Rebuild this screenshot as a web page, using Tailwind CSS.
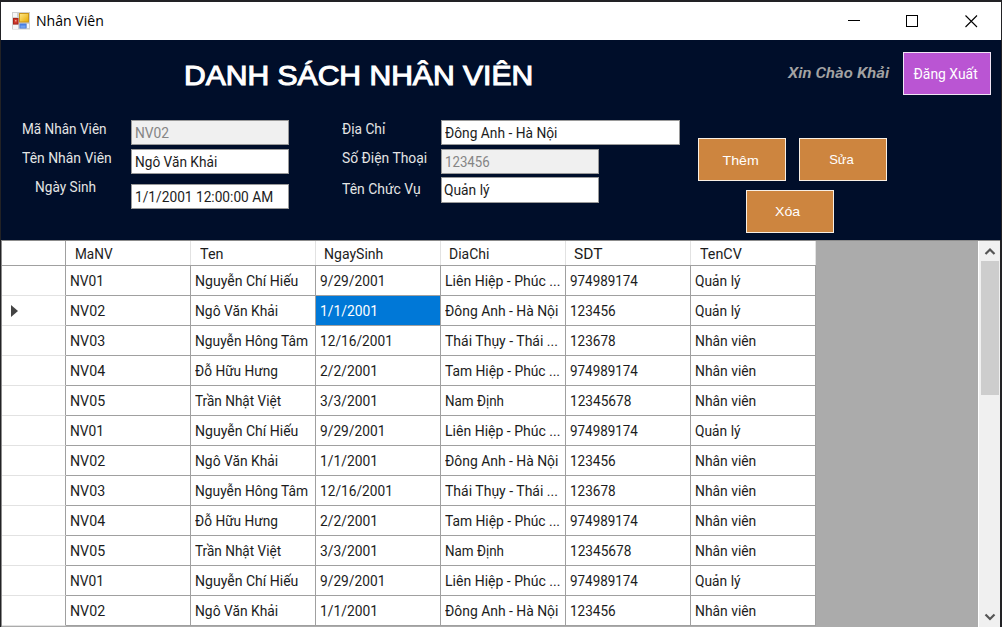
<!DOCTYPE html>
<html lang="vi">
<head>
<meta charset="utf-8">
<title>Nhân Viên</title>
<script src="https://cdn.jsdelivr.net/npm/@tailwindcss/browser@4"></script>
</head>
<body class="h-[627px] w-[1002px] overflow-hidden bg-[#222225] font-['Roboto',sans-serif] text-[15px] leading-[20px] text-[#1c1c1c]">
<div class="flex h-[627px] w-[1002px] flex-col pr-[2px] pl-px pt-[2px]">
  <header class="flex h-[38px] w-[1000px] shrink-0 items-center bg-white pl-[11px]">
    <svg class="h-[18px] w-[18px] shrink-0" viewBox="0 0 18 18">
      <defs>
        <linearGradient id="y" x2="1" y2="1"><stop stop-color="#ffe98a"/><stop offset="1" stop-color="#e6a800"/></linearGradient>
        <linearGradient id="b" x2="0" y2="1"><stop stop-color="#3f74df"/><stop offset="1" stop-color="#8fbdfb"/></linearGradient>
      </defs>
      <rect width="18" height="17.5" fill="#cfcfcf"/>
      <path d="M1 1h4v4H1zM1 13h5v4H1zM15 12h2v4h-2z" fill="#f6f6f6"/>
      <rect x="7.5" y="1.5" width="9" height="8.500" fill="url(#y)" stroke="#c9951a"/>
      <rect x="1.500" y="6.500" width="4.500" height="5.500" fill="#d0392b" stroke="#a92318"/>
      <rect x="3" y="8" width="1.500" height="1.500" fill="#f0a090"/>
      <rect x="8" y="12" width="6" height="4" fill="url(#b)" stroke="#4b7fe0"/>
    </svg>
    <span data-w="68" class="ml-[6px] inline-block origin-left whitespace-nowrap font-['Open_Sans',sans-serif] text-[14.5px] text-black">Nhân Viên</span>
    <div class="ml-auto flex h-full items-center gap-[46px] pr-[23px]">
      <svg class="h-[13px] w-[13px]" viewBox="0 0 13 13" shape-rendering="crispEdges"><path d="M1 5.500h12" stroke="#000"/></svg>
      <svg class="h-[13px] w-[13px]" viewBox="0 0 13 13" shape-rendering="crispEdges"><rect x=".5" y=".5" width="11" height="11" fill="none" stroke="#000"/></svg>
      <svg class="h-[13px] w-[13px]" viewBox="0 0 13 13"><path d="M.5.5l11.500 11.500M12 .5L.5 12" stroke="#000" stroke-width="1.100"/></svg>
    </div>
  </header>

  <section class="flex h-[200px] w-[1000px] shrink-0 flex-col bg-[#000e2a] text-[#e4e4e4]">
    <div class="flex h-[80px] shrink-0 items-start">
      <h1 data-w="349" class="mt-[18px] ml-[183px] inline-block origin-left whitespace-nowrap font-['Liberation_Sans',sans-serif] text-[28px] leading-[36px] font-normal text-white [-webkit-text-stroke:1.1px_white]">DANH SÁCH NHÂN VIÊN</h1>
      <div class="ml-auto flex pr-[10px]">
        <div class="mt-[23px] w-[115px]"><span data-w="101" class="inline-block origin-left whitespace-nowrap text-[15px] font-semibold italic text-[#a3a3a3]">Xin Chào Khải</span></div>
        <button class="mt-[12px] flex h-[43px] w-[88px] items-center justify-center border-[1.5px] border-[#f0e4f4] bg-[#ba55d3] text-white"><span data-w="64" class="-ml-[2px] inline-block whitespace-nowrap">Đăng Xuất</span></button>
      </div>
    </div>
    <div class="flex items-start">
      <div class="w-[130px] shrink-0 pl-[21px]">
        <div class="mt-[-1px] h-[29px]"><span data-w="85" class="inline-block origin-left whitespace-nowrap">Mã Nhân Viên</span></div>
        <div class="h-[29px]"><span data-w="90" class="inline-block origin-left whitespace-nowrap">Tên Nhân Viên</span></div>
        <div class="h-[29px] pl-[13px]"><span data-w="61" class="inline-block origin-left whitespace-nowrap">Ngày Sinh</span></div>
      </div>
      <div class="w-[158px] shrink-0 text-[#1c1c1c]">
        <div class="flex h-[25px] items-center border border-[#9a9a9a] bg-[#f0f0f0] pl-[3px] text-[#858585]"><span data-w="34" class="inline-block origin-left whitespace-nowrap">NV02</span></div>
        <div class="mt-[4px] flex h-[25px] items-center border border-[#9a9a9a] bg-white pl-[3px]"><span data-w="82" class="inline-block origin-left whitespace-nowrap">Ngô Văn Khải</span></div>
        <div class="mt-[10px] flex h-[25px] items-center border border-[#9a9a9a] bg-white pl-[3px]"><span data-w="138" class="inline-block origin-left whitespace-nowrap">1/1/2001 12:00:00 AM</span></div>
      </div>
      <div class="w-[152px] shrink-0 pl-[53px]">
        <div class="mt-[-1px] h-[29px]"><span data-w="43" class="inline-block origin-left whitespace-nowrap">Địa Chỉ</span></div>
        <div class="h-[31px]"><span data-w="85" class="inline-block origin-left whitespace-nowrap">Số Điện Thoại</span></div>
        <div class="h-[29px]"><span data-w="79" class="inline-block origin-left whitespace-nowrap">Tên Chức Vụ</span></div>
      </div>
      <div class="w-[257px] shrink-0 text-[#1c1c1c]">
        <div class="flex h-[25px] w-[239px] items-center border border-[#9a9a9a] bg-white pl-[3px]"><span data-w="112" class="inline-block origin-left whitespace-nowrap">Đông Anh - Hà Nội</span></div>
        <div class="mt-[4px] flex h-[25px] w-[158px] items-center border border-[#9a9a9a] bg-[#f0f0f0] pl-[3px] text-[#858585]"><span data-w="45" class="inline-block origin-left whitespace-nowrap">123456</span></div>
        <div class="mt-[3px] flex h-[26px] w-[158px] items-center border border-[#9a9a9a] bg-white pl-[2px]"><span data-w="46" class="inline-block origin-left whitespace-nowrap">Quản lý</span></div>
      </div>
      <div class="flex w-[190px] shrink-0 flex-wrap gap-x-[13px] gap-y-[9px] pt-[18px] text-white font-['Liberation_Sans',sans-serif]">
        <button class="flex h-[43px] w-[88px] items-center justify-center border-[1.5px] border-[#f8efe5] bg-[#cd853f]"><span data-w="36" class="mt-[3px] -ml-[3px] inline-block whitespace-nowrap text-[13px]">Thêm</span></button>
        <button class="flex h-[43px] w-[88px] items-center justify-center border-[1.5px] border-[#f8efe5] bg-[#cd853f]"><span data-w="25" class="mt-px -ml-[3px] inline-block whitespace-nowrap text-[13px]">Sửa</span></button>
        <button class="ml-[48px] flex h-[43px] w-[88px] items-center justify-center border-[1.5px] border-[#f8efe5] bg-[#cd853f]"><span data-w="25" class="mt-px -ml-[5px] inline-block whitespace-nowrap text-[13px]">Xóa</span></button>
      </div>
    </div>
  </section>

  <main class="flex h-[387px] w-[999px] shrink-0 overflow-hidden border-t border-l border-[#8c8c8c] bg-[#ababab]">
    <div class="w-[814px] shrink-0">
      <div class="grid h-[25px] grid-cols-[64px_repeat(6,125px)] border-b border-[#a0a0a0] bg-white">
        <div class="border-r border-[#a0a0a0]"></div>
        <div class="flex items-center border-r border-[#e2e2e2] pt-px pl-[9px]"><span data-w="38" class="inline-block origin-left whitespace-nowrap">MaNV</span></div>
        <div class="flex items-center border-r border-[#e2e2e2] pt-px pl-[9px]"><span data-w="23" class="inline-block origin-left whitespace-nowrap">Ten</span></div>
        <div class="flex items-center border-r border-[#e2e2e2] pt-px pl-[8px]"><span data-w="59" class="inline-block origin-left whitespace-nowrap">NgaySinh</span></div>
        <div class="flex items-center border-r border-[#e2e2e2] pt-px pl-[8px]"><span data-w="40" class="inline-block origin-left whitespace-nowrap">DiaChi</span></div>
        <div class="flex items-center border-r border-[#e2e2e2] pt-px pl-[8px]"><span data-w="29" class="inline-block origin-left whitespace-nowrap">SDT</span></div>
        <div class="flex items-center border-r border-[#e2e2e2] pt-px pl-[9px]"><span data-w="42" class="inline-block origin-left whitespace-nowrap">TenCV</span></div>
      </div>
      <div id="rows"></div>
    </div>
    <div class="ml-auto flex w-[22px] shrink-0 flex-col items-center border-l border-white bg-[#f0f0f0]">
      <svg class="h-[20px] w-[20px] shrink-0" viewBox="0 0 20 20"><path d="M5.500 13L10 8.500l4.500 4.500" fill="none" stroke="#555" stroke-width="2.200"/></svg>
      <div class="h-[134px] w-[18px] shrink-0 bg-[#cdcdcd]"></div>
      <svg class="mt-auto h-[21px] w-[20px] shrink-0" viewBox="0 0 20 21"><path d="M5.500 8.500L10 13l4.500-4.500" fill="none" stroke="#555" stroke-width="2.200"/></svg>
    </div>
  </main>
</div>
<script>
const people = [
  [['NV01',34],['Nguyễn Chí Hiếu',103],['9/29/2001',65],['Liên Hiệp - Phúc ...',115],['974989174',68]],
  [['NV02',35],['Ngô Văn Khải',83],['1/1/2001',58],['Đông Anh - Hà Nội',113],['123456',46]],
  [['NV03',35],['Nguyễn Hông Tâm',113],['12/16/2001',73],['Thái Thụy - Thái ...',113],['123678',46]],
  [['NV04',35],['Đỗ Hữu Hưng',83],['2/2/2001',58],['Tam Hiệp - Phúc ...',115],['974989174',68]],
  [['NV05',35],['Trần Nhật Việt',86],['3/3/2001',58],['Nam Định',59],['12345678',61]]
];
const managers = [0, 1, 5, 10];
let html = '';
for (let i = 0; i < 12; i++) {
  const role = managers.includes(i) ? ['Quản lý', 46] : ['Nhân viên', 61];
  const marker = i === 1 ? '<svg class="h-[12px] w-[7px]" viewBox="0 0 7 12"><path d="M0 0l7 6-7 6z" fill="#444"/></svg>' : '';
  html += '<div class="grid h-[30px] grid-cols-[64px_repeat(6,125px)] bg-white"><div class="flex items-center border-r border-b border-r-[#a0a0a0] border-b-[#e2e2e2] pl-[9px]">' + marker + '</div>';
  [...people[i % 5], role].forEach(([text, width], c) => {
    const colour = i === 1 && c === 2 ? 'bg-[#0078d7] text-white' : '';
    html += '<div class="flex items-center border-r border-b border-[#a0a0a0] pl-[3.5px] ' + colour + '"><span data-w="' + width + '" class="inline-block origin-left whitespace-nowrap">' + text + '</span></div>';
  });
  html += '</div>';
}
document.getElementById('rows').innerHTML = html;
const fit = el => {
  if (el.offsetWidth) el.style.transform = 'scaleX(' + (el.dataset.w / el.offsetWidth).toFixed(4) + ')';
};
const observer = new ResizeObserver(entries => entries.forEach(e => fit(e.target)));
document.querySelectorAll('[data-w]').forEach(el => observer.observe(el));
window.addEventListener('load', () => document.querySelectorAll('[data-w]').forEach(fit));
</script>
</body>
</html>
